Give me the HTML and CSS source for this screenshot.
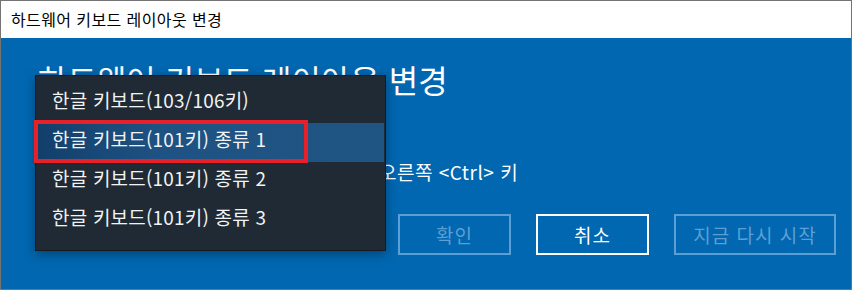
FILE: index.html
```html
<!DOCTYPE html>
<html lang="ko">
<head>
<meta charset="utf-8">
<link rel="stylesheet" href="styles.css">
</head>
<body>
<div class="window">
  <div class="titlebar">하드웨어 키보드 레이아웃 변경</div>
  <div class="content">
    <h1 class="heading">하드웨어 키보드 레이아웃 변경</h1>
    <div class="keyrow"><span class="klabel">한자 키:</span><span class="kvalue">오른쪽 &lt;Ctrl&gt; 키</span></div>
    <div class="buttons">
      <button class="btn disabled">확인</button>
      <button class="btn active">취소</button>
      <button class="btn disabled wide">지금 다시 시작</button>
    </div>
  </div>
  <ul class="menu">
    <li class="item">한글 키보드(103/106키)</li>
    <li class="item selected"><span class="mark"></span>한글 키보드(101키) 종류 1</li>
    <li class="item">한글 키보드(101키) 종류 2</li>
    <li class="item">한글 키보드(101키) 종류 3</li>
  </ul>
</div>
</body>
</html>
```
FILE: styles.css
```css
* { box-sizing: border-box; }
html, body { margin: 0; padding: 0; }
body {
  font-family: "Noto Sans CJK KR", "Noto Sans", sans-serif;
  background: #fff;
}
.window {
  position: relative;
  width: 852px;
  height: 290px;
  border: 1px solid #747474;
  display: flex;
  flex-direction: column;
  overflow: hidden;
}
.titlebar {
  height: 37px;
  flex: none;
  background: #fff;
  color: #000;
  font-size: 16px;
  letter-spacing: 0.4px;
  line-height: 36px;
  padding-left: 10px;
}
.content {
  flex: 1;
  background: #0067b0;
  color: #fff;
  padding: 21px 15px 0 37px;
  display: flex;
  flex-direction: column;
}
.heading {
  margin: 0;
  font-weight: normal;
  font-size: 32px;
  line-height: 40px;
  white-space: nowrap;
}
.keyrow {
  margin-top: 60px;
  font-size: 19px;
  letter-spacing: 0.5px;
  line-height: 26px;
  display: flex;
  white-space: nowrap;
}
.klabel { width: 341px; flex: none; }
.buttons {
  margin-top: 29px;
  display: flex;
  justify-content: flex-end;
  gap: 25px;
}
.btn {
  font-family: inherit;
  font-size: 19px;
  letter-spacing: 1px;
  height: 41px;
  width: 113px;
  background: transparent;
  border: 2px solid #fff;
  color: #fff;
  padding: 0;
  line-height: 35px;
}
.btn.wide { width: 162px; }
.btn.disabled {
  border-color: #5c9fd4;
  color: #5c9fd4;
}
.menu {
  position: absolute;
  left: 34px;
  top: 74px;
  width: 351px;
  margin: 0;
  padding: 8px 1px 10px 1px;
  list-style: none;
  background: #1f2a35;
  border: 1px solid #141b22;
  box-shadow: 0 3px 10px rgba(0, 0, 0, 0.35);
  color: #f2f2f2;
  font-size: 19px;
  letter-spacing: 0.2px;
}
.item {
  position: relative;
  height: 39px;
  line-height: 32px;
  padding-left: 15px;
  white-space: nowrap;
}
.item.selected {
  background: linear-gradient(90deg, #123f6a 0%, #1e5283 35%, #1f5583 100%);
}
.mark {
  position: absolute;
  left: -3px;
  top: -3px;
  width: 274px;
  height: 43px;
  border: 4px solid #e8202a;
}
```
